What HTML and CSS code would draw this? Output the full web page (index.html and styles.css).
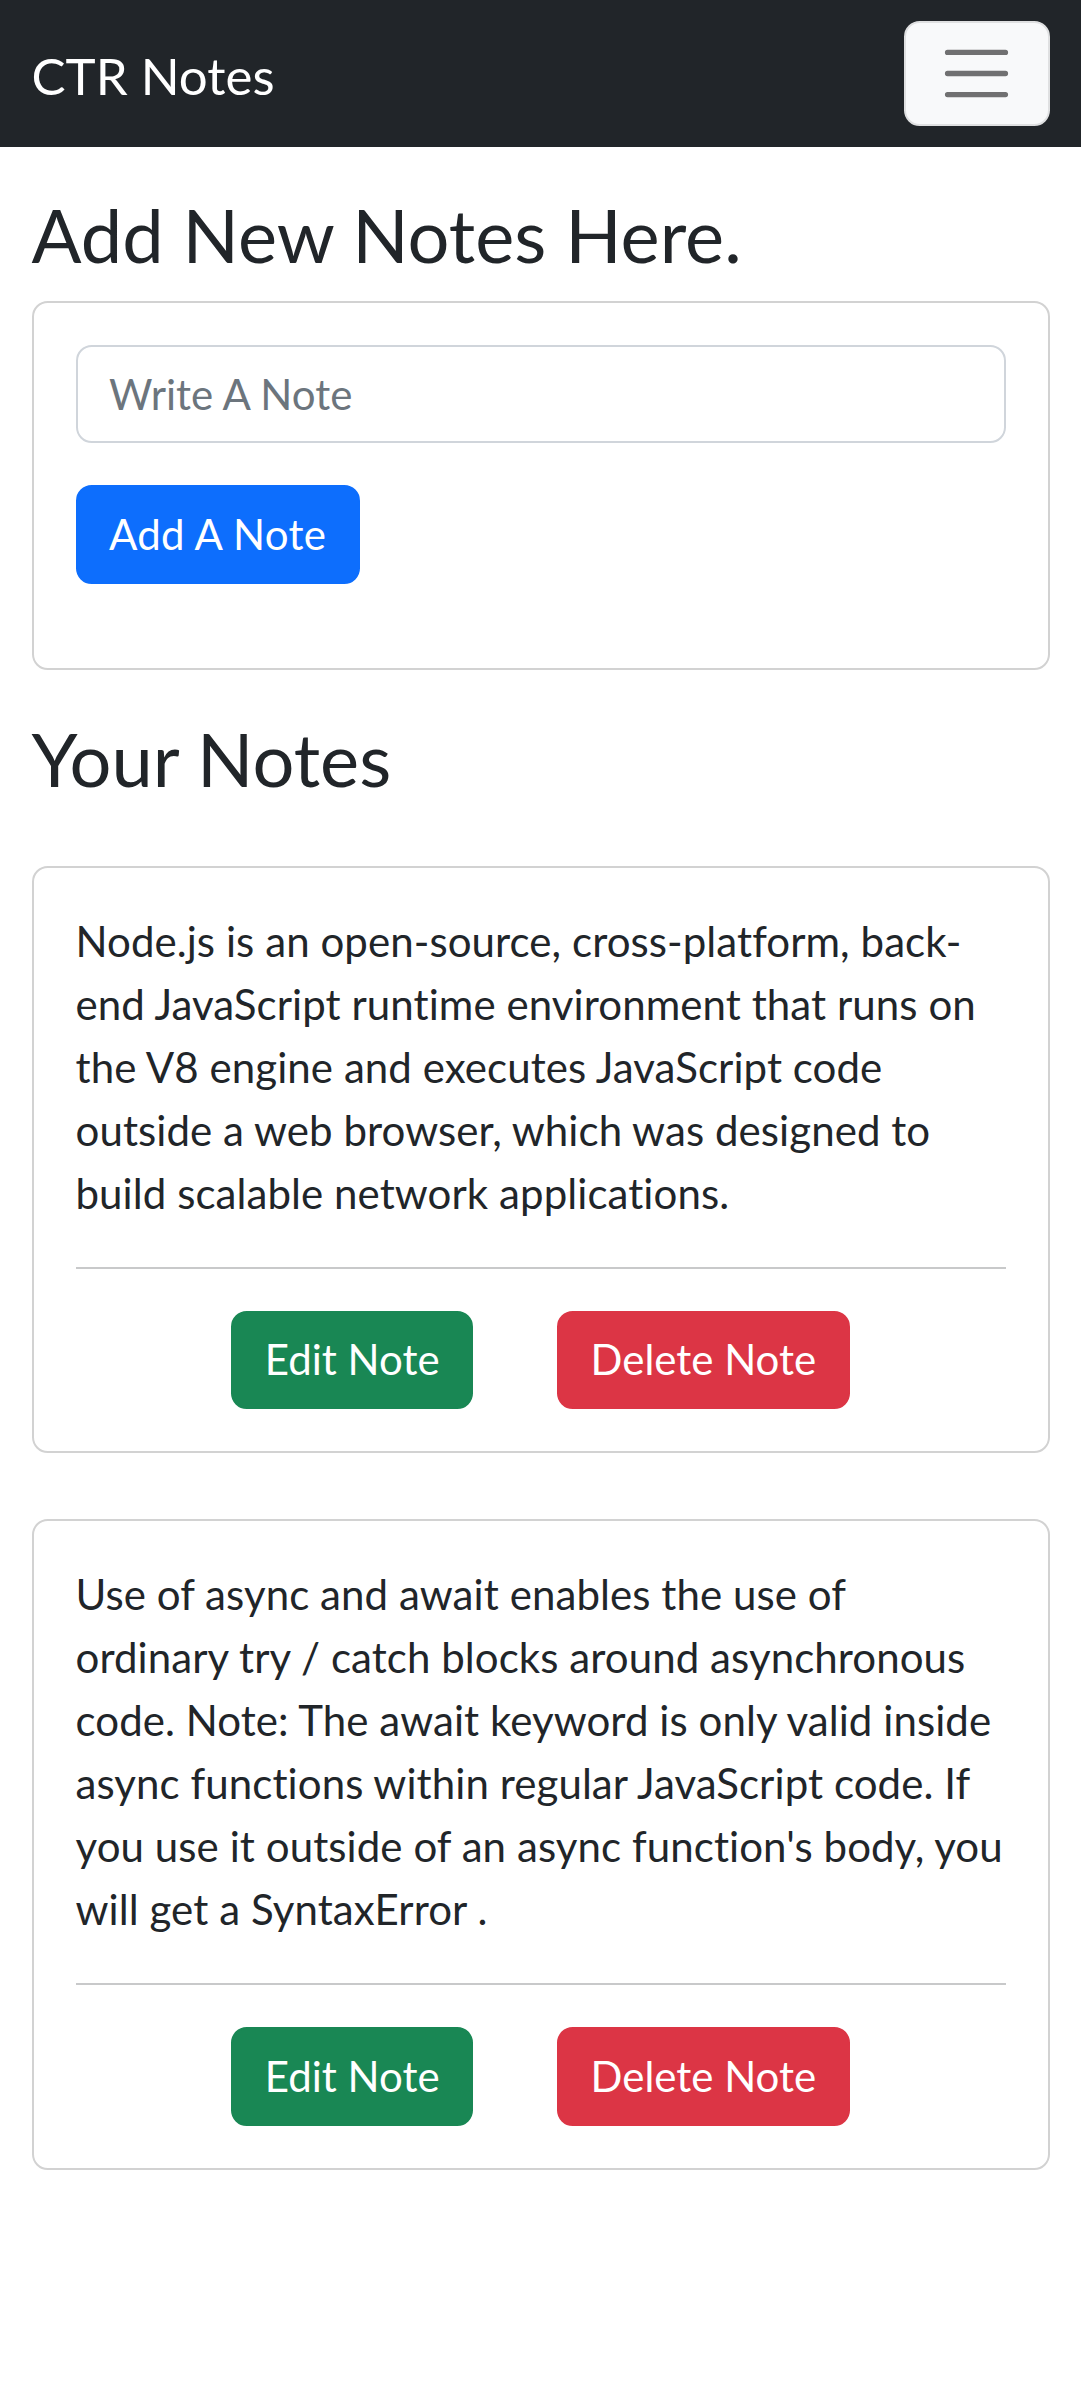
FILE: index.html
```html
<!DOCTYPE html>
<html lang="en">
<head>
<meta charset="utf-8">
<meta name="viewport" content="width=device-width, initial-scale=1">
<title>CTR Notes</title>
<link rel="stylesheet" href="styles.css">
</head>
<body>
<nav class="navbar">
  <a class="brand" href="#">CTR Notes</a>
  <button class="toggler" type="button" aria-label="Toggle navigation">
    <svg class="toggler-icon" viewBox="0 0 30 30" aria-hidden="true">
      <path d="M4 7h22M4 15h22M4 23h22" stroke="rgba(0,0,0,0.55)" stroke-width="2" stroke-linecap="round" fill="none"/>
    </svg>
  </button>
</nav>

<main class="container">
  <h1 class="title title-first">Add New Notes Here.</h1>
  <div class="card">
    <div class="card-body">
      <form class="add-form">
        <input class="note-input" type="text" placeholder="Write A Note">
        <button class="btn btn-primary" type="button">Add A Note</button>
      </form>
    </div>
  </div>

  <h1 class="title title-notes">Your Notes</h1>
  <div class="notes">
    <div class="card">
      <div class="card-body">
        <p class="note-text">Node.js is an open-source, cross-platform, back-end JavaScript runtime environment that runs on the V8 engine and executes JavaScript code outside a web browser, which was designed to build scalable network applications.</p>
        <hr class="divider">
        <div class="actions">
          <button class="btn btn-success" type="button">Edit Note</button>
          <button class="btn btn-danger" type="button">Delete Note</button>
        </div>
      </div>
    </div>
    <div class="card">
      <div class="card-body">
        <p class="note-text">Use of async and await enables the use of ordinary try / catch blocks around asynchronous code. Note: The await keyword is only valid inside async functions within regular JavaScript code. If you use it outside of an async function's body, you will get a SyntaxError .</p>
        <hr class="divider">
        <div class="actions">
          <button class="btn btn-success" type="button">Edit Note</button>
          <button class="btn btn-danger" type="button">Delete Note</button>
        </div>
      </div>
    </div>
  </div>
</main>
</body>
</html>
```
FILE: styles.css
```css
*, *::before, *::after { box-sizing: border-box; }

html, body {
  margin: 0;
  background: #ffffff;
}

body {
  font-family: Lato, "Liberation Sans", sans-serif;
  font-size: 42px;
  line-height: 63px;
  color: #212529;
}

/* Navbar */
.navbar {
  display: flex;
  align-items: center;
  justify-content: space-between;
  height: 147px;
  padding: 21px 31.5px;
  background: #212529;
}

.brand {
  display: block;
  padding: 16px 0 10px;
  font-size: 51px;
  line-height: 78.75px;
  color: #ffffff;
  text-decoration: none;
  white-space: nowrap;
}

.toggler {
  display: flex;
  align-items: center;
  justify-content: center;
  width: 146px;
  height: 105px;
  padding: 0;
  background: #f8f9fa;
  border: 2px solid #dfe0e1;
  border-radius: 15.75px;
}

.toggler-icon {
  display: block;
  width: 79px;
  height: 79px;
}

/* Content */
.container {
  padding: 0 31.5px 60px;
}

.title {
  margin: 0 0 21px;
  font-size: 74px;
  line-height: 88.8px;
  font-weight: 400;
  color: #212529;
}

.title-first { margin-top: 44px; }
.title-notes { margin-top: 45px; }

.card {
  background: #ffffff;
  border: 2px solid #d2d2d2;
  border-radius: 15.75px;
}

.card-body {
  padding: 42px;
}

.add-form {
  display: flex;
  flex-direction: column;
  align-items: flex-start;
  margin: 0;
}

.note-input {
  display: block;
  width: 100%;
  margin: 0 0 42px;
  padding: 15.75px 31.5px;
  font-family: inherit;
  font-size: 42px;
  line-height: 63px;
  color: #212529;
  background: #ffffff;
  border: 2px solid #d0d5db;
  border-radius: 15.75px;
  outline: none;
}

.note-input::placeholder {
  color: #6c757d;
  opacity: 1;
}

.btn {
  display: inline-block;
  padding: 15.75px 31.5px;
  font-family: inherit;
  font-size: 42px;
  line-height: 63px;
  font-weight: 400;
  color: #ffffff;
  border: 2px solid transparent;
  border-radius: 15.75px;
  cursor: pointer;
  white-space: nowrap;
}

.add-form .btn {
  margin-bottom: 42px;
  letter-spacing: 0.3px;
}

.btn-primary { background: #0d6efd; border-color: #0d6efd; }
.btn-success { background: #198754; border-color: #198754; }
.btn-danger  { background: #dc3545; border-color: #dc3545; }

.notes {
  display: flex;
  flex-direction: column;
  gap: 66px;
  margin-top: 62px;
}

.note-text {
  margin: 0 0 42px;
  letter-spacing: 0.075px;
}

.divider {
  height: 0;
  margin: 42px 0;
  border: 0;
  border-top: 2px solid #c8c9ca;
}

.actions {
  display: flex;
  justify-content: center;
  gap: 84px;
}
```
